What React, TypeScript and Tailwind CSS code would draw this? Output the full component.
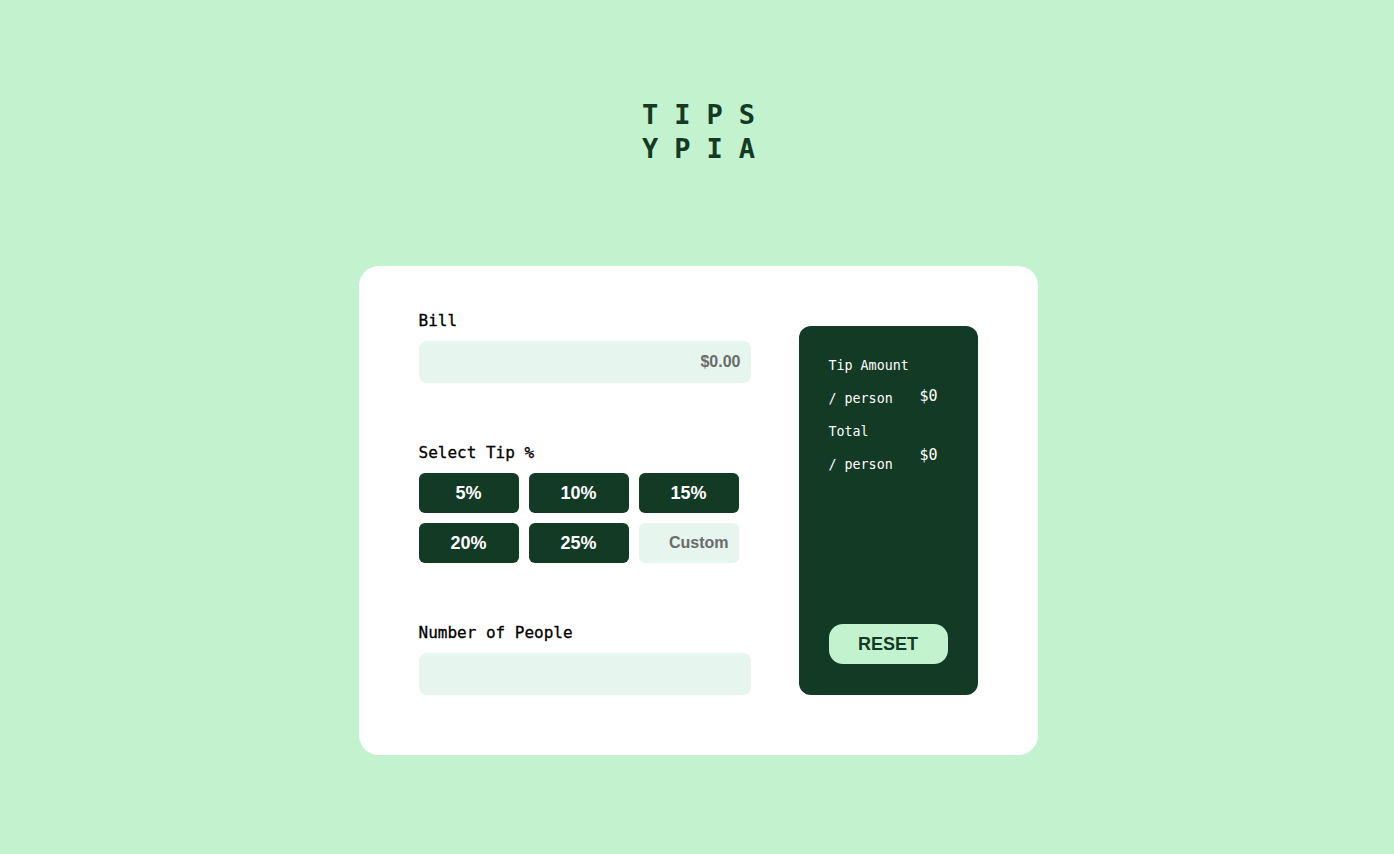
const tips = ["5%", "10%", "15%", "20%", "25%"];

export default function App() {
  return (
    <div className="min-h-screen w-full bg-[#c3f2cf] font-['DejaVu_Sans_Mono',monospace]">
      <header className="flex justify-center pt-[98px]">
        <h1 className="pl-[19px] text-left text-[27px] font-bold leading-[34px] tracking-[16px] text-[#133a24]">
          TIPS
          <br />
          YPIA
        </h1>
      </header>

      <main className="mt-[100px] flex justify-center pl-[2px]">
        <div className="flex w-[679px] gap-[48px] rounded-[20px] bg-white px-[60px] pb-[60px] pt-[43px]">
          {/* inputs */}
          <div className="flex w-[332px] flex-col">
            <label className="text-base leading-6 text-black [-webkit-text-stroke:0.3px_black]">Bill</label>
            <input
              type="text"
              placeholder="$0.00"
              className="mt-2 h-[42px] w-full rounded-lg bg-[#e6f6ee] pr-[10px] text-right font-['Liberation_Sans',Arial,sans-serif] text-base font-bold text-[#6b6b6b] outline-none placeholder:text-[#6b6b6b]"
            />

            <label className="mt-[58px] text-base leading-6 text-black [-webkit-text-stroke:0.3px_black]">Select Tip %</label>
            <div className="mt-2 grid w-[320px] grid-cols-3 gap-[10px]">
              {tips.map((t) => (
                <button
                  key={t}
                  type="button"
                  className="h-10 rounded-md bg-[#133a24] font-['Liberation_Sans',Arial,sans-serif] text-lg font-bold text-white"
                >
                  {t}
                </button>
              ))}
              <input
                type="text"
                placeholder="Custom"
                className="h-10 w-full rounded-md bg-[#e6f6ee] pr-[10px] text-right font-['Liberation_Sans',Arial,sans-serif] text-base font-bold text-[#6b6b6b] outline-none placeholder:text-[#6b6b6b]"
              />
            </div>

            <label className="mt-[58px] text-base leading-6 text-black [-webkit-text-stroke:0.3px_black]">Number of People</label>
            <input
              type="text"
              className="mt-2 h-[42px] w-full rounded-lg bg-[#e6f6ee] px-[10px] text-right outline-none"
            />
          </div>

          {/* results */}
          <div className="mt-[17px] flex h-[369px] w-[179px] flex-col justify-between rounded-xl bg-[#133a24] px-[30px] pb-[31px] pt-[23px] text-white">
            <div>
              <div className="grid grid-cols-[91px_auto]">
                <div className="text-[13.33px] leading-[33px]">
                  <p>Tip Amount</p>
                  <p>/ person</p>
                </div>
                <p className="mt-[37px] text-[15px] leading-5">$0</p>
              </div>
              <div className="grid grid-cols-[91px_auto]">
                <div className="text-[13.33px] leading-[33px]">
                  <p>Total</p>
                  <p>/ person</p>
                </div>
                <p className="mt-[30px] text-[15px] leading-5">$0</p>
              </div>
            </div>
            <button
              type="button"
              className="h-10 w-[119px] rounded-[14px] bg-[#c3f2cf] font-['Liberation_Sans',Arial,sans-serif] text-lg font-bold text-[#133a24]"
            >
              RESET
            </button>
          </div>
        </div>
      </main>
    </div>
  );
}
